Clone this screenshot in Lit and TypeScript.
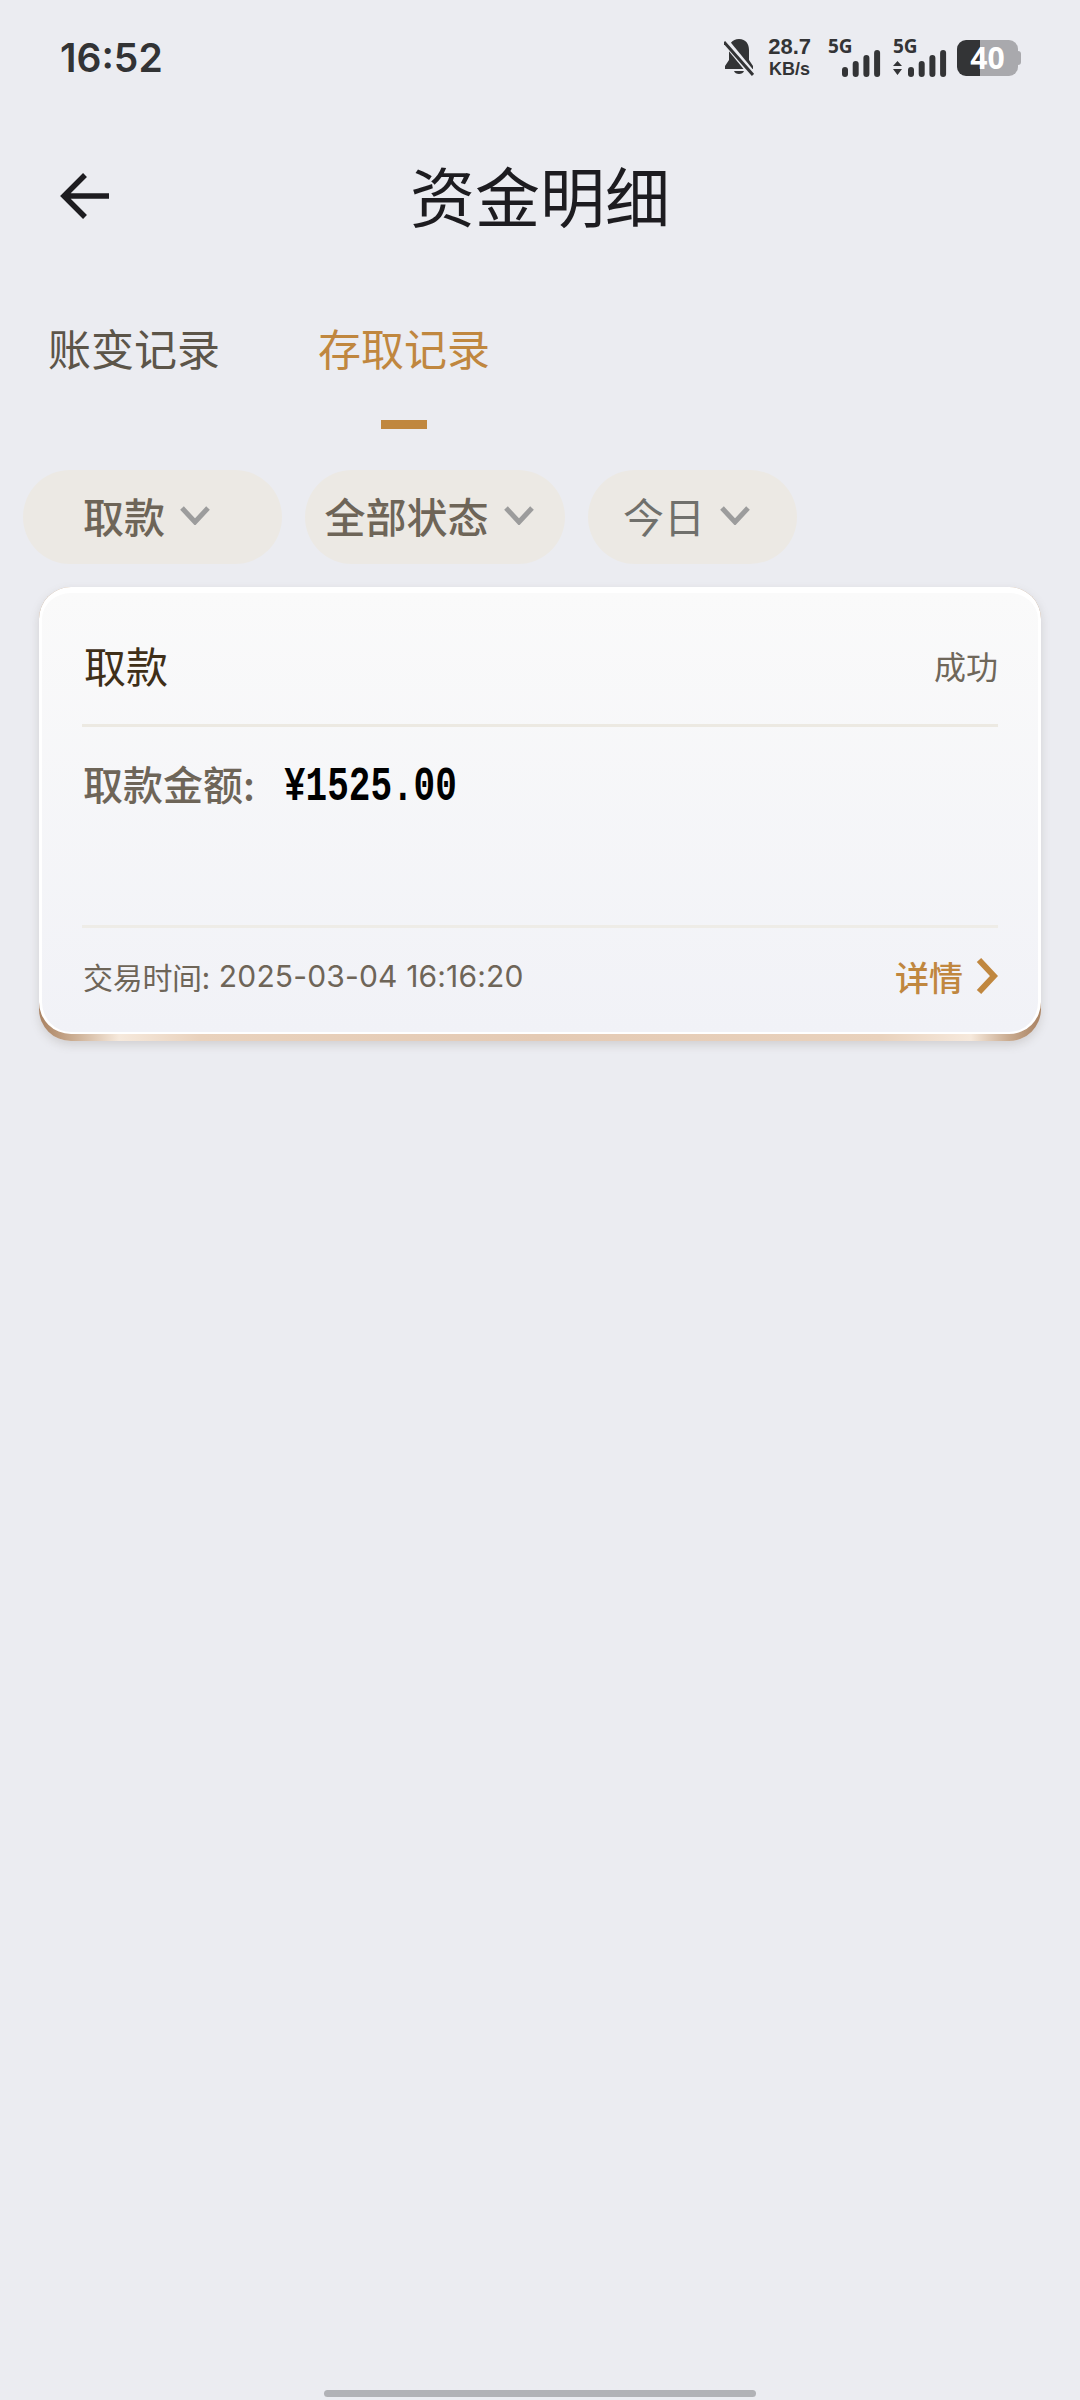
import { LitElement, html, css, svg } from 'lit';
import { customElement, state } from 'lit/decorators.js';

const filters = [
  { label: '取款', cls: 'w1' },
  { label: '全部状态', cls: 'w2' },
  { label: '今日', cls: 'w3 light' },
];

// signal strength bars, same geometry for both SIMs
const bars = (x: number) => [10, 16, 22, 27].map((h, i) => svg`
  <rect x=${x + i * 10.7} y=${38 - h} width="6" height=${h} rx="3" fill="#333436"></rect>
`);

@customElement('app-root')
export class AppRoot extends LitElement {
  @state() activeTab = 1;

  static styles = css`
    :host {
      display: block;
      font-family: "Noto Sans CJK SC", "Noto Sans", sans-serif;
    }

    .page {
      min-height: 2400px;
      box-sizing: border-box;
      background: #ebecf1;
      display: flex;
      flex-direction: column;
    }

    .status {
      height: 115px;
      box-sizing: border-box;
      padding: 0 59px 0 60px;
      display: flex;
      align-items: center;
      justify-content: space-between;
    }

    .time {
      font-family: Inter, sans-serif;
      font-weight: 600;
      font-size: 39px;
      color: #323335;
    }

    .status-right {
      display: flex;
      align-items: center;
    }

    .speed {
      margin: 0 17px 0 14px;
      font-family: "Liberation Sans", sans-serif;
      font-weight: 700;
      color: #333436;
      text-align: center;
      display: flex;
      flex-direction: column;
    }
    .speed b { font-size: 22px; line-height: 23px; }
    .speed span { font-size: 18px; line-height: 22px; }

    .sim {
      position: relative;
      height: 38px;
      display: block;
    }

    .sim-label {
      position: absolute;
      top: -3px;
      left: 0;
      font-family: "Open Sans", sans-serif;
      font-weight: 700;
      font-size: 19px;
      line-height: 20px;
      color: #333436;
    }

    .sim-box {
      position: relative;
      display: block;
    }
    .sim-box.one { width: 54px; margin-right: 11px; }
    .sim-box.two { width: 55px; margin-right: 9px; }

    .battery {
      position: relative;
      width: 61px;
      height: 36px;
      border-radius: 9px;
      background: linear-gradient(90deg, #333436 0 38%, #a9a9ad 38% 100%);
      margin-right: 3px;
      display: flex;
      align-items: center;
      justify-content: center;
      color: #fff;
      font-family: "Open Sans", sans-serif;
      font-weight: 700;
      font-size: 30px;
    }
    .battery::after {
      content: '';
      position: absolute;
      right: -3px;
      top: 11px;
      width: 3px;
      height: 14px;
      border-radius: 0 3px 3px 0;
      background: #a9a9ad;
    }

    .nav {
      height: 164px;
      width: 100%;
      display: grid;
      grid-template-columns: 1fr auto 1fr;
      align-items: center;
      padding: 0 60px;
      box-sizing: border-box;
    }

    .back { width: 50px; height: 50px; display: block; }

    h1 {
      margin: 0 0 6px;
      font-weight: 400;
      font-size: 65px;
      line-height: 84px;
      color: #1d1c20;
    }

    .tabs {
      display: flex;
      gap: 98px;
      padding-left: 48px;
      height: 70px;
      margin-top: 33px;
    }

    .tab {
      position: relative;
      font-size: 43px;
      line-height: 70px;
      color: #5c5549;
      height: 70px;
    }

    .tab.active { color: #c0873f; }

    .tab.active::after {
      content: '';
      position: absolute;
      left: 50%;
      top: 108px;
      margin-left: -23px;
      width: 46px;
      height: 9px;
      background: #c0873f;
    }

    .filters {
      display: flex;
      gap: 23px;
      padding-left: 23px;
      margin-top: 88px;
    }

    .pill {
      height: 94px;
      border-radius: 47px;
      background: #ece9e4;
      display: flex;
      align-items: center;
      justify-content: center;
      gap: 14px;
      padding: 0 11px 4px 0;
      font-size: 41px;
      font-weight: 500;
      color: #6e6558;
      box-sizing: border-box;
    }
    .pill.w1 { width: 259px; }
    .pill.w2 { width: 260px; }
    .pill.w3 { width: 209px; }
    .pill.light { color: #70706c; font-weight: 400; }

    .chev { width: 32px; height: 20px; display: block; }

    .card-wrap {
      margin: 23px 39px 0;
      padding-bottom: 7px;
      border-radius: 32px;
      background: linear-gradient(90deg, #a98262 0%, #c7a88c 3%, #f6e9dc 8%, #e9d2bd 16%, #e4cab4 50%, #e9d2bd 84%, #f6e9dc 93%, #c7a88c 97%, #a98262 100%);
      box-shadow: 0 4px 10px rgba(120, 110, 100, 0.22);
    }

    .card {
      border: solid #fff;
      border-width: 6px 3px 2px;
      border-radius: 32px;
      background: linear-gradient(180deg, #fafafa 0%, #f1f2f7 100%);
      padding: 0 40px;
      box-sizing: border-box;
      height: 447px;
      display: flex;
      flex-direction: column;
    }

    .head {
      height: 134px;
      box-sizing: border-box;
      padding: 12px 3px 0 2px;
      display: flex;
      align-items: center;
      justify-content: space-between;
      border-bottom: 3px solid #ece9e2;
    }

    .type {
      font-size: 42px;
      color: #3f2f18;
    }

    .result {
      font-size: 32px;
      color: #6f675a;
      margin-right: -3px;
    }

    .body {
      height: 201px;
      box-sizing: border-box;
      padding: 32px 2px 0 1px;
      border-bottom: 3px solid #eeece7;
      display: flex;
      align-items: flex-start;
    }

    .amount-label {
      font-size: 40px;
      font-weight: 500;
      line-height: 48px;
      color: #6e6558;
      width: 201px;
      flex: none;
    }

    .amount {
      display: inline-block;
      margin-top: 4px;
      font-family: "Liberation Mono", monospace;
      font-weight: 700;
      font-size: 48px;
      line-height: 48px;
      color: #000;
      transform: scaleX(0.75);
      transform-origin: left center;
    }

    .foot {
      flex: 1;
      padding: 0 0 8px 1px;
      display: flex;
      align-items: center;
      justify-content: space-between;
    }

    .when {
      font-size: 30px;
      letter-spacing: -0.3px;
      color: #6e6558;
      display: flex;
      align-items: center;
    }
    .when span {
      font-family: Inter, sans-serif;
      font-size: 30px;
      letter-spacing: 0.16px;
      margin-left: 9px;
    }

    .detail {
      display: flex;
      align-items: center;
      gap: 13px;
      font-size: 34px;
      font-weight: 500;
      color: #c0873f;
    }
    .detail svg { width: 22px; height: 38px; display: block; }

    .home {
      margin: auto auto 3px;
      width: 432px;
      height: 7px;
      border-radius: 4px;
      background: #b1b2b6;
    }
  `;

  chevron() {
    return html`<svg class="chev" viewBox="0 0 32 20">
      <path d="M3 3 L16 17 L29 3" fill="none" stroke="#9c9c9c" stroke-width="5"></path>
    </svg>`;
  }

  statusIcons() {
    return html`
      <div class="status-right">
        <svg width="30" height="38" viewBox="0 0 30 38">
          <path d="M15 0C8 0 5 5 5 11v10L1 27v3h28v-3l-4-6V11C25 5 22 0 15 0z" fill="#333436"></path>
          <path d="M10 32h10c-1 4-9 4-10 0z" fill="#333436"></path>
          <path d="M1 2 L29 36" stroke="#ebecf1" stroke-width="7"></path>
          <path d="M0 3 L29 36" stroke="#333436" stroke-width="3"></path>
        </svg>
        <div class="speed"><b>28.7</b><span>KB/s</span></div>
        <div class="sim-box one">
          <span class="sim-label">5G</span>
          <svg class="sim" width="54" height="38" viewBox="0 0 54 38">${bars(14)}</svg>
        </div>
        <div class="sim-box two">
          <span class="sim-label">5G</span>
          <svg class="sim" width="55" height="38" viewBox="0 0 55 38">
            <path d="M0 27 L4.5 22 L9 27z M0 30 L9 30 L4.5 36z" fill="#333436"></path>
            ${bars(15)}
          </svg>
        </div>
        <div class="battery">40</div>
      </div>
    `;
  }

  render() {
    const tabs = ['账变记录', '存取记录'];
    return html`
      <div class="page">
        <div class="status">
          <div class="time">16:52</div>
          ${this.statusIcons()}
        </div>
        <div class="nav">
          <svg class="back" viewBox="0 0 50 50">
            <path d="M25 3 L4 24 L25 45 M4 24 L49 24" fill="none" stroke="#1d1c20" stroke-width="5.5"></path>
          </svg>
          <h1>资金明细</h1>
        </div>
        <div class="tabs">
          ${tabs.map((t, i) => html`<div class="tab ${i === this.activeTab ? 'active' : ''}">${t}</div>`)}
        </div>
        <div class="filters">
          ${filters.map((f) => html`<div class="pill ${f.cls}">${f.label}${this.chevron()}</div>`)}
        </div>
        <div class="card-wrap">
          <div class="card">
            <div class="head">
              <div class="type">取款</div>
              <div class="result">成功</div>
            </div>
            <div class="body">
              <div class="amount-label">取款金额:</div>
              <div class="amount">¥1525.00</div>
            </div>
            <div class="foot">
              <div class="when">交易时间:<span>2025-03-04 16:16:20</span></div>
              <div class="detail">详情
                <svg viewBox="0 0 22 38">
                  <path d="M3 3 L18 19 L3 35" fill="none" stroke="#c0873f" stroke-width="6"></path>
                </svg>
              </div>
            </div>
          </div>
        </div>
        <div class="home"></div>
      </div>
    `;
  }
}
